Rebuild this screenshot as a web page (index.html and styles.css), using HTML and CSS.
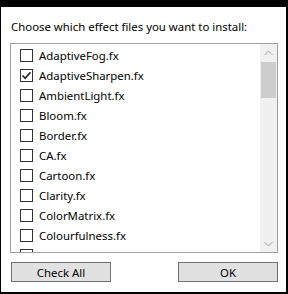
FILE: index.html
```html
<!DOCTYPE html>
<html lang="en">
<head>
  <meta charset="UTF-8">
  <title>Select Effects</title>
  <link rel="stylesheet" href="styles.css">
</head>
<body>
  <div class="window">
    <p class="prompt">Choose which effect files you want to install:</p>

    <div class="listbox">
      <ul class="items">
        <li><span class="box"></span>AdaptiveFog.fx</li>
        <li><span class="box"><svg width="11" height="11" viewBox="0 0 11 11"><path d="M1.5 5.5 L4.2 8.3 L9.5 2.2" fill="none" stroke="#222" stroke-width="1.6"/></svg></span>AdaptiveSharpen.fx</li>
        <li><span class="box"></span>AmbientLight.fx</li>
        <li><span class="box"></span>Bloom.fx</li>
        <li><span class="box"></span>Border.fx</li>
        <li><span class="box"></span>CA.fx</li>
        <li><span class="box"></span>Cartoon.fx</li>
        <li><span class="box"></span>Clarity.fx</li>
        <li><span class="box"></span>ColorMatrix.fx</li>
        <li><span class="box"></span>Colourfulness.fx</li>
        <li><span class="box"></span>Curves.fx</li>
      </ul>
      <div class="scrollbar">
        <div class="arrow">
          <svg width="9" height="6" viewBox="0 0 9 6"><path d="M0.5 5 L4.5 1 L8.5 5" fill="none" stroke="#a6a6a6" stroke-width="1"/></svg>
        </div>
        <div class="thumb"></div>
        <div class="track"></div>
        <div class="arrow">
          <svg width="9" height="6" viewBox="0 0 9 6"><path d="M0.5 1 L4.5 5 L8.5 1" fill="none" stroke="#a6a6a6" stroke-width="1"/></svg>
        </div>
      </div>
    </div>

    <div class="buttons">
      <button type="button">Check All</button>
      <button type="button">OK</button>
    </div>
  </div>
</body>
</html>
```

FILE: styles.css
```css
body {
  margin: 0;
  background-color: #fff;
  font-family: "Noto Sans", "Open Sans", sans-serif;
  font-size: 11.4px;
  color: #000;
}

.window {
  width: 288px;
  height: 294px;
  box-sizing: border-box;
  border-top: 7px solid #000;
  border-left: 1px solid #000;
  border-right: 2px solid #000;
  border-bottom: 2px solid #000;
  padding: 0 8px 0 9px;
  display: flex;
  flex-direction: column;
}

.prompt {
  margin: 11px 0 0 1px;
  height: 17px;
  line-height: 17px;
  white-space: nowrap;
}

.listbox {
  margin-top: 8px;
  height: 210px;
  box-sizing: border-box;
  border: 1px solid #a0a0a0;
  display: flex;
}

.items {
  flex: 1;
  list-style: none;
  margin: 0;
  padding: 1px 0 0 9px;
  overflow: hidden;
}

.items li {
  height: 20px;
  display: flex;
  align-items: center;
  white-space: nowrap;
}

.box {
  width: 13px;
  height: 13px;
  flex-shrink: 0;
  box-sizing: border-box;
  border: 1px solid #333;
  background-color: #fff;
  margin-right: 6px;
  display: flex;
  align-items: center;
  justify-content: center;
}

.scrollbar {
  width: 17px;
  background-color: #f0f0f0;
  display: flex;
  flex-direction: column;
}

.arrow {
  height: 17px;
  display: flex;
  align-items: center;
  justify-content: center;
}

.thumb {
  height: 36px;
  margin: 1px 1px 0;
  background-color: #cdcdcd;
}

.track {
  flex: 1;
}

.buttons {
  margin-top: 9px;
  padding-left: 1px;
  display: flex;
  justify-content: space-between;
}

button {
  width: 100px;
  height: 20px;
  padding: 0;
  background-color: #e1e1e1;
  border: 1px solid #707070;
  font-family: inherit;
  font-size: inherit;
  color: #000;
}
```
